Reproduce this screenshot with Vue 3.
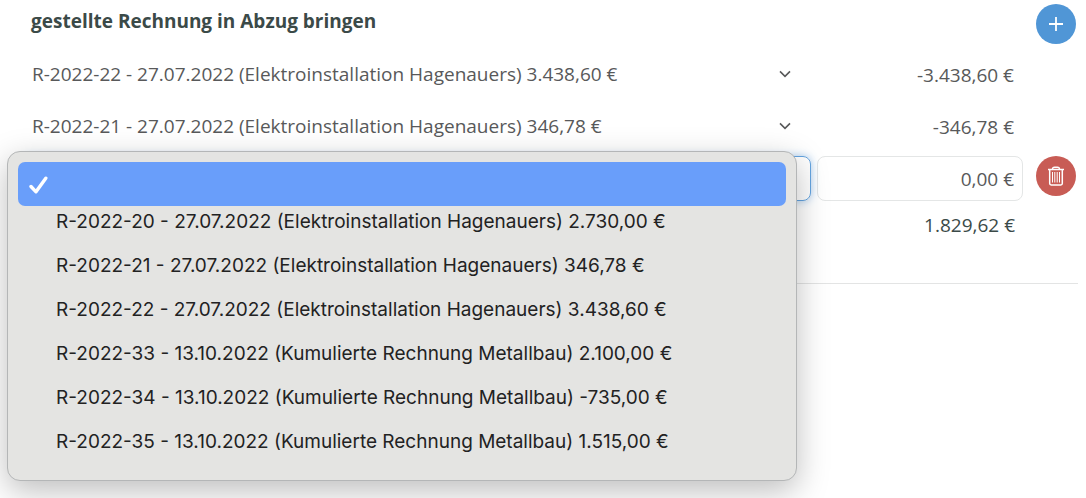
<script setup>
import { ref } from 'vue';

const invoices = [
  { id: 20, label: 'R-2022-20 - 27.07.2022 (Elektroinstallation Hagenauers) 2.730,00 €' },
  { id: 21, label: 'R-2022-21 - 27.07.2022 (Elektroinstallation Hagenauers) 346,78 €' },
  { id: 22, label: 'R-2022-22 - 27.07.2022 (Elektroinstallation Hagenauers) 3.438,60 €' },
  { id: 33, label: 'R-2022-33 - 13.10.2022 (Kumulierte Rechnung Metallbau) 2.100,00 €' },
  { id: 34, label: 'R-2022-34 - 13.10.2022 (Kumulierte Rechnung Metallbau) -735,00 €' },
  { id: 35, label: 'R-2022-35 - 13.10.2022 (Kumulierte Rechnung Metallbau) 1.515,00 €' },
];

const rows = ref([
  { invoice: 22, amount: '-3.438,60 €' },
  { invoice: 21, amount: '-346,78 €' },
  { invoice: '', amount: '0,00 €' },
]);
const activeRow = ref(2);

const addRow = () => {
  rows.value.push({ invoice: '', amount: '0,00 €' });
  activeRow.value = rows.value.length - 1;
};

const removeRow = (index) => {
  rows.value.splice(index, 1);
  activeRow.value = -1;
};

const choose = (row, id) => {
  row.invoice = id;
  activeRow.value = -1;
};
</script>

<template>
  <main class="page">
    <section class="deductions">
      <header class="header">
        <h2 class="title">gestellte Rechnung in Abzug bringen</h2>
        <button type="button" class="round-button add" aria-label="Rechnung hinzufügen" @click="addRow">
          <svg width="16" height="16" viewBox="0 0 16 16">
            <path d="M8 1v14M1 8h14" fill="none" stroke="currentColor" stroke-width="1.8" />
          </svg>
        </button>
      </header>

      <div class="rows">
        <div v-for="(row, index) in rows" :key="index" class="row" :class="{ active: index === activeRow }">
          <div class="select-wrap">
            <select v-model="row.invoice" class="field invoice" aria-label="Rechnung">
              <option value=""></option>
              <option v-for="invoice in invoices" :key="invoice.id" :value="invoice.id">{{ invoice.label }}</option>
            </select>
            <svg class="chevron" width="12" height="8" viewBox="0 0 12 8">
              <path d="M1 1.4l5 5 5-5" fill="none" stroke="currentColor" stroke-width="1.6" />
            </svg>

            <!-- Open invoice menu -->
            <div v-if="index === activeRow" class="menu" role="listbox" aria-label="Rechnungen">
              <button type="button" class="empty-option" role="option" aria-selected="true" aria-label="Keine Rechnung" @click="choose(row, '')">
                <svg width="20" height="20" viewBox="0 0 20 20">
                  <path d="M3 11.5l5 5.3L17.8 3.2" fill="none" stroke="currentColor" stroke-width="3.4" stroke-linecap="round" stroke-linejoin="round" />
                </svg>
              </button>
              <div class="options">
                <button
                  v-for="invoice in invoices"
                  :key="invoice.id"
                  type="button"
                  class="option"
                  role="option"
                  aria-selected="false"
                  @click="choose(row, invoice.id)"
                >{{ invoice.label }}</button>
              </div>
            </div>
          </div>
          <input v-model="row.amount" class="field amount" type="text" aria-label="Betrag" />
          <button v-if="index === activeRow" type="button" class="round-button remove" aria-label="Zeile löschen" @click="removeRow(index)">
            <svg width="18" height="20" viewBox="0 0 18 20" fill="none" stroke="currentColor">
              <path d="M1 3.5h16" stroke-width="1.5" />
              <path d="M5.5 3.2q0-2 2-2h3q2 0 2 2" stroke-width="1.4" />
              <path d="M2.7 4v13.6q0 1.4 1.4 1.4h9.8q1.4 0 1.4-1.4V4" stroke-width="1.5" />
              <path d="M5.5 6v10.5M7.8 6v10.5M10.2 6v10.5M12.5 6v10.5" stroke-width="1" />
            </svg>
          </button>
        </div>
      </div>

      <div class="total">1.829,62 €</div>
    </section>
  </main>
</template>

<style>
body {
  margin: 0;
  background: #fff;
}
</style>

<style scoped>
.page {
  min-height: 100vh;
  overflow: hidden;
}

.deductions {
  margin: 0 8px;
  padding: 4px 2px 41px 14px;
  border-bottom: 1px solid #e3e4e4;
  color: #3b4a48;
  font-family: "Open Sans", sans-serif;
  font-size: 19px;
}

.header {
  display: flex;
  align-items: flex-start;
  justify-content: space-between;
  padding-left: 9px;
}

.title {
  margin: 0;
  font-size: 19px;
  font-weight: 700;
  line-height: 34px;
}

.round-button {
  display: flex;
  align-items: center;
  justify-content: center;
  width: 40px;
  height: 40px;
  padding: 0;
  border: none;
  border-radius: 50%;
  color: #fff;
  cursor: pointer;
}

.add {
  background: #5096d6;
}

.remove {
  background: #c85c55;
}

.rows {
  display: flex;
  flex-direction: column;
  gap: 7px;
  margin-top: 8px;
}

.row {
  display: grid;
  grid-template-columns: minmax(0, 1fr) 206px 47px;
  column-gap: 6px;
}

.row .remove {
  justify-self: end;
}

.select-wrap {
  position: relative;
}

.field {
  display: block;
  box-sizing: border-box;
  width: 100%;
  height: 45px;
  border: 1px solid transparent;
  border-radius: 8px;
  background: transparent;
  color: #58595a;
  font-family: inherit;
  font-size: 19px;
  outline: none;
}

.invoice {
  appearance: none;
  padding: 0 40px 2px 9px;
}

.amount {
  padding: 0 8px;
  text-align: right;
}

.active .invoice {
  border-color: #64a4e0;
  box-shadow: 0 0 8px #a9cdf0;
}

.active .amount {
  border-color: #e4e6e6;
}

.chevron {
  position: absolute;
  top: 18px;
  right: 20px;
  color: #58595a;
  pointer-events: none;
}

.menu {
  position: absolute;
  top: -5px;
  right: 14px;
  left: -15px;
  z-index: 1;
  padding: 10px 10px 22px;
  border: 1px solid #b4b6b7;
  border-radius: 13px;
  background: #e4e4e2;
  box-shadow: 0 10px 32px rgba(0, 0, 0, 0.26);
}

.empty-option {
  display: flex;
  align-items: center;
  width: 100%;
  height: 44px;
  padding: 2px 10px 0;
  border: none;
  border-radius: 7px;
  background: #699efa;
  color: #fff;
}

.options {
  display: flex;
  flex-direction: column;
  gap: 12px;
}

.option {
  padding: 0 0 0 38px;
  border: none;
  background: none;
  color: #222;
  font-family: Inter, sans-serif;
  font-size: 19px;
  line-height: 32px;
  text-align: left;
  white-space: nowrap;
}

.total {
  margin-top: 7px;
  padding-right: 61px;
  line-height: 34px;
  text-align: right;
}
</style>
